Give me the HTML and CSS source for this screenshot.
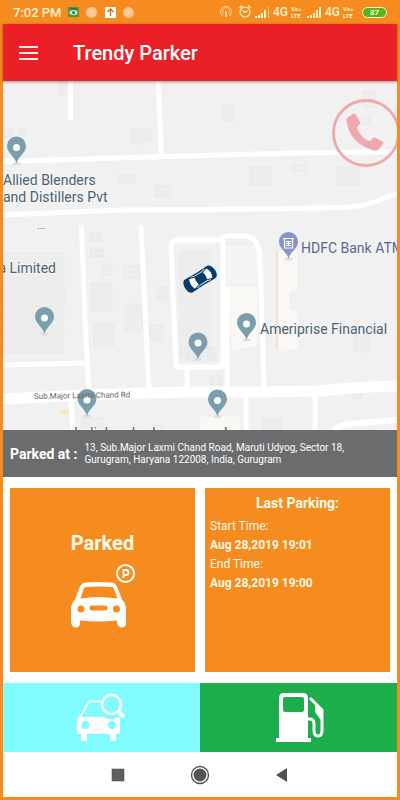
FILE: index.html
```html
<!DOCTYPE html>
<html lang="en">
<head>
<meta charset="utf-8">
<meta name="viewport" content="width=device-width, initial-scale=1">
<title>Trendy Parker</title>
<link rel="stylesheet" href="styles.css">
</head>
<body>
<div class="status">
  <span class="clock">7:02 PM</span>
  <svg class="notices" width="68" height="12" viewBox="68 6 68 12" aria-hidden="true">
    <rect x="68" y="7" width="11" height="10" rx="1" fill="#4a9a42"/>
    <ellipse cx="73.5" cy="12.500" rx="4" ry="2.500" fill="#d8ecc8"/><circle cx="73.500" cy="12.500" r="1.500" fill="#38705a"/><path d="M70 9h7" stroke="#285c38"/>
    <circle cx="91.500" cy="12.500" r="5.500" fill="#fbc58c"/><path d="M88 13l4-4M90 15l5-5M87 11l2-2" stroke="#fddcb8"/>
    <rect x="105" y="7" width="11" height="11" rx="1" fill="#fff"/><path d="M110.500 16V9.500M107.500 12l3-3 3 3" fill="none" stroke="#c67b22" stroke-width="1.500"/>
    <circle cx="128.500" cy="12.500" r="5.500" fill="#fbc58c"/><path d="M125 13l4-4M127 15l5-5M124 11l2-2" stroke="#fddcb8"/>
  </svg>
  <div class="signals">
    <svg width="32" height="14" viewBox="218 6 32 14" fill="none" aria-hidden="true">
      <g stroke="#fcd09a" stroke-width="1"><path d="M220.500 17a5.500 5.500 0 1 1 7 0M222 15a3.500 3.500 0 1 1 4 0"/><path d="M224 12v6" stroke-width="2"/></g>
      <g stroke="#fff3c8" stroke-width="1.200"><circle cx="243" cy="13" r="5"/><path d="M240.500 11.500L243 13.500l2.500-2M237.500 9l2.500-2.500M248.500 9L246 6.500"/></g>
    </svg>
    <svg class="bars" width="15" height="11" viewBox="0 0 15 11" aria-hidden="true"><path d="M0 9h2v2H0zM3 8h2v3H3zM6 6h2v5H6zM9 3h2v8H9z" fill="#fff8d8"/><path d="M13 0h1v11h-1z" fill="#fbc98b"/></svg>
    <span class="net">4G</span><span class="volte"><span>Vo»</span><span>LTE</span></span>
    <svg class="bars" width="15" height="11" viewBox="0 0 15 11" aria-hidden="true"><path d="M0 9h2v2H0zM3 8h2v3H3zM6 6h2v5H6zM9 3h2v8H9zM12 0h2v11h-2z" fill="#fff0c8"/></svg>
    <span class="net">4G</span><span class="volte"><span>Vo»</span><span>LTE</span></span>
    <span class="battery">87</span>
  </div>
</div>
<div class="app">
  <header class="topbar">
    <button class="menu" aria-label="Menu"><span></span><span></span><span></span></button>
    <h1>Trendy Parker</h1>
  </header>
  <main>
    <section class="map" aria-label="Map">
      <svg viewBox="3 81 394 349" preserveAspectRatio="xMidYMid slice">
        <defs>
          <g id="pin"><ellipse cx="0" cy="26" rx="4" ry="1.500" fill="#dcdfe0"/><path d="M0 26C-1.500 18.500-9.500 16-9.500 8.500a9.500 9.500 0 0 1 19 0C9.500 16 1.500 18.500 0 26z"/></g>
        </defs>
        <rect x="3" y="81" width="394" height="349" fill="#f1f1f1"/>
        <g fill="#ededed" stroke="#e4e4e4" stroke-width=".6">
          <path d="M59 81h9v13h-9zM4 130h9v8H4zM20 129h6v6h-6zM131 129h21v11h-9v4h-12zM118 175h17v8h-17zM155 186h16v11h-16zM90 232h11v9H90zM90 249h13v8H90zM4 253h60v33H4zM4 288h61v16H4zM4 306h60v16H4zM4 325h60v14H4zM4 342h59v11H4zM91 250h12v6H91zM103 264h9v11h-9zM124 266h16v12h-16zM91 283h21v28H91zM125 304h18v26h-18zM94 324h20v22H94zM157 287h10v13h-10zM150 325h13v16h-13z"/>
          <path d="M223 105h11v16h-11zM363 91h13v16h-13zM362 116h8v8h-8zM395 110h2v8h-2zM250 167h21v18h-21zM291 165h14v6h-14zM337 167h22v18h-22zM180 251h31v106h-31zM354 335h15v17h-15zM210 376h12v9h-12zM352 392h9v6h-9zM263 419h18v11h-18zM82 418h21v12H82zM152 425h10v5h-10zM187 353h12v8h-12zM208 347h8v13h-8z"/>
        </g>
        <g fill="#faf8f5" stroke="#eceae7" stroke-width=".6"><path d="M228 286h30v60l-27 6zM278 250h20v42h-8v17h9v40l-21 4zM200 416h41v14h-41z"/></g>
        <path d="M225 245h31q3 4 3 16v24h-34z" fill="#f5f5f5" stroke="#e6e6e6" stroke-width=".6"/>
        <path d="M277 251v98" stroke="#f2dfdc" stroke-width="2"/>
        <rect x="60" y="409" width="9" height="6" fill="#fbe8c8"/>
        <g fill="none" stroke="#fff" stroke-linejoin="round" stroke-width="5">
          <path d="M70.500 81v39M158 81l3.500 74M3 161.500L150 157l120-3.500 127-2M3 215l120-5 147-1 70-1.500c28-1 35-6 57-14"/>
          <path d="M81.500 227l3.500 90 4 80M141 227l8 163" stroke-linecap="round"/>
          <path d="M180 367h39q4 0 4-4V243q0-3-4-3h-42q-6 0-6 6l5 117q0 4 4 4zM220 242q2-6 8-6h17q14 1 15 22l4 130M3 365l82-2M187 368v23M227 286v106M71 401l2 29M246 396v34M315 394v36"/>
          <path d="M3 399q150-8 220-7 50 0 95-1 35-4 79-5" stroke-width="11"/>
          <path d="M334 430q5-5 16-6l47-4" stroke-width="6"/>
        </g>
        <g fill="#7b9eae">
          <use href="#pin" x="16.500" y="137.500"/><use href="#pin" x="44.500" y="308"/><use href="#pin" x="87" y="390"/><use href="#pin" x="198" y="333.500"/><use href="#pin" x="246.500" y="314"/><use href="#pin" x="217.500" y="390.500"/>
        </g>
        <g fill="#fff"><circle cx="16.500" cy="147.500" r="3.500"/><circle cx="44.500" cy="318" r="3.500"/><circle cx="87" cy="400" r="3.500"/><circle cx="198" cy="343" r="3.500"/><circle cx="246.500" cy="324" r="3.500"/><circle cx="217.500" cy="400.500" r="3.500"/></g>
        <use href="#pin" x="288.500" y="233" fill="#8b93cf"/>
        <path d="M283 238.500h11M284.500 239v9h8v-9M286 241.500h5M286 243.500h5M286 245.500h5M288.500 241v5" fill="none" stroke="#fff" stroke-width="1.200"/>
        <g class="place">
          <text x="3" y="185">Allied Blenders</text><text x="3" y="202">and Distillers Pvt</text>
          <text x="56" y="273" text-anchor="end">a Limited</text>
          <text x="260" y="334">Ameriprise Financial</text>
          <text x="301" y="253" class="bank">HDFC Bank ATM</text>
          <text x="74" y="438">IndiaLends</text><text x="152" y="438">Innovaccer Inc</text>
          <text x="37" y="229" class="dots">...</text>
        </g>
        <text x="34" y="399" class="road" transform="rotate(-1 34 399)">Sub.Major Laxmi Chand Rd</text>
        <g transform="translate(200 279) rotate(-32)">
          <path d="M-14-7.500Q0-6.500 13-7.500q4 1 4.500 7.500T13 7.500Q0 6.500-14 7.500-17.500 6-17.500 0T-14-7.500z" fill="#073b6b"/>
          <path d="M-9.500-5.500l5.500 1.500q-1 4 0 8l-5.500 1.500q-2.500-5.500 0-11zM6-4l5-1.500q3.500 5.500 0 11L6 4q1.500-4 0-8z" fill="#fff"/>
          <path d="M-7-6.300L-3-5.200H5l4-1.100M-7 6.300l4-1.100H5l4 1.100" fill="none" stroke="#d7e4ef" stroke-width=".9"/>
        </g>
      </svg>
      <button class="call" aria-label="Call"><svg viewBox="0 0 68 68" aria-hidden="true"><circle cx="34" cy="34" r="32.500" fill="none" stroke="#f0a9ab" stroke-width="2.800"/><path d="M15 25Q13 19 18 17l3-2q2-1 3 1l4 7q1 2-1 3l-2 2q1 6 8 12 3 2 5 2l3-3q1-1 3 0l7 4q1 1 0 2l-4 5q-2 3-7 1Q19 44 15 25z" fill="#f0a9ab"/></svg></button>
    </section>
    <section class="address"><strong>Parked at :</strong><p>13, Sub.Major Laxmi Chand Road, Maruti Udyog, Sector 18, Gurugram, Haryana 122008, India, Gurugram</p></section>
    <section class="cards">
      <button class="card parked">
        <span>Parked</span>
        <svg width="66" height="66" viewBox="70 564 66 66" aria-hidden="true">
          <circle cx="125.500" cy="574.500" r="8.500" fill="none" stroke="#fff" stroke-width="2"/><path d="M123.500 579v-8h2.500a2.500 2.500 0 0 1 0 5h-2.500" fill="none" stroke="#fff" stroke-width="1.800"/>
          <path fill="#fff" fill-rule="evenodd" d="M86 583.500q12-1 25 0 4 0 6 4l5 13q4 4 4 10v13q0 5-4 5t-5-5v-2q-18 2-37 0v2q0 5-4 5t-5-5v-13q0-6 4-10l5-13q2-4 6-4zM85.500 588q-1 0-2 2l-3 9.500q18-3 37 0l-3.500-9.500q-1-2-2-2-13-1-26.500 0zM81 606.500a3.500 3.500 0 1 0 0 7 3.500 3.500 0 0 0 0-7zM116.500 606.500a3.500 3.500 0 1 0 0 7 3.500 3.500 0 0 0 0-7zM92 606.500a2.500 2.500 0 0 0 0 5h13a2.500 2.500 0 0 0 0-5z"/>
        </svg>
      </button>
      <div class="card last"><h2>Last Parking:</h2><dl><dt>Start Time:</dt><dd>Aug 28,2019 19:01</dd><dt>End Time:</dt><dd>Aug 28,2019 19:00</dd></dl></div>
    </section>
    <section class="actions">
      <button class="find" aria-label="Find car"><svg width="50" height="50" viewBox="76 693 50 50" aria-hidden="true"><g fill="none" stroke="#fff"><path d="M78 719l10-17.500h11.500" stroke-width="2"/><circle cx="110.500" cy="704.500" r="9.500" stroke-width="2.500"/><path d="M117 711l6 6" stroke-width="4"/></g><path fill="#fff" fill-rule="evenodd" d="M79 717h23q8 4 16 0 1 0 1 2v15h-4v7h-6v-7H86v7h-6v-7h-4v-15zM84.500 721a4 4 0 1 0 0 8 4 4 0 0 0 0-8zM111 721a4 4 0 1 0 0 8 4 4 0 0 0 0-8z"/></svg></button>
      <button class="fuel" aria-label="Fuel"><svg width="50" height="50" viewBox="274 693 50 50" aria-hidden="true"><path fill="#fff" fill-rule="evenodd" d="M284 693h19q5 0 5 5v40h3v4h-35v-4h3v-40q0-5 5-5zM285 697q-2 0-2 2v11q0 2 2 2h17q2 0 2-2v-11q0-2-2-2z"/><path d="M308 719h2q4 0 4 5v6q0 6 4 6 4 0 4-6v-20L310 698" fill="none" stroke="#fff" stroke-width="3"/><path d="M315 703l8 7v10l-3-1-5-7z" fill="#fff"/></svg></button>
    </section>
  </main>
  <nav class="system">
    <button aria-label="Recent apps"><svg width="20" height="20" viewBox="0 0 20 20"><rect x="4" y="4" width="12" height="12" fill="#606060" stroke="#444" stroke-width=".5"/></svg></button>
    <button aria-label="Home"><svg width="20" height="20" viewBox="0 0 20 20"><circle cx="10" cy="10" r="8.500" fill="none" stroke="#505050" stroke-width="1.300"/><circle cx="10" cy="10" r="6.500" fill="#555"/></svg></button>
    <button aria-label="Back"><svg width="20" height="20" viewBox="0 0 20 20"><path d="M4 10l11-7v14z" fill="#505050"/></svg></button>
  </nav>
</div>
</body>
</html>
```
FILE: styles.css
```css
* { box-sizing: border-box; }
body {
  margin: 0;
  min-height: 100vh;
  display: flex;
  flex-direction: column;
  background: #f68b1f;
  font-family: Roboto, "Liberation Sans", sans-serif;
}
h1, h2, p, dl, dd { margin: 0; }
button { border: 0; padding: 0; background: none; font: inherit; color: inherit; }
svg { display: block; flex: none; }

.status {
  height: 24px;
  padding: 0 13px;
  display: flex;
  align-items: center;
  color: #fff6d0;
}
.clock { font-size: 13px; font-weight: 500; width: 55px; white-space: nowrap; }
.signals { margin-left: auto; display: flex; align-items: center; gap: 3px; }
.net { font-size: 12px; font-weight: 500; }
.volte {
  display: flex;
  flex-direction: column;
  width: 13px;
  font-size: 6px;
  line-height: 7px;
  font-weight: 700;
}
.battery {
  width: 25px;
  height: 11px;
  margin-left: 3px;
  border: 1px solid #fff3c8;
  border-radius: 6px;
  background: #58b31c;
  font-size: 8px;
  line-height: 9px;
  font-weight: 700;
  text-align: center;
}

.app {
  flex: 1;
  display: flex;
  flex-direction: column;
  margin: 0 3px 3px;
  background: #fff;
}
.topbar {
  height: 57px;
  padding: 0 16px;
  display: flex;
  align-items: center;
  gap: 35px;
  background: #eb2027;
  color: #fff;
  box-shadow: 0 1px 3px rgba(0, 0, 0, .4);
  position: relative;
  z-index: 1;
}
.topbar h1 { font-size: 20px; font-weight: 500; line-height: 24px; }
.menu { width: 19px; display: grid; gap: 4px; }
.menu span { height: 2px; background: #fde8e4; }

main { flex: 1; display: flex; flex-direction: column; }
.map { flex: 1; min-height: 240px; position: relative; overflow: hidden; }
.map > svg { position: absolute; width: 100%; height: 100%; }
.place { font-size: 14px; fill: #4a6170; paint-order: stroke; stroke: #f6f6f6; stroke-width: 2px; }
.bank { fill: #5a6294; }
.dots { font-size: 10px; }
.road { font-size: 8px; fill: #666; }
.call { position: absolute; top: 18px; right: -3px; width: 68px; height: 68px; }

.address {
  min-height: 47px;
  padding: 0 7px;
  display: flex;
  align-items: center;
  gap: 7px;
  background: #6b6c6e;
  color: #fff;
}
.address strong { font-size: 14px; white-space: nowrap; }
.address p { font-size: 10px; line-height: 12px; }

.cards {
  display: grid;
  grid-template-columns: 1fr 1fr;
  gap: 10px;
  padding: 11px 7px;
}
.card { min-height: 184px; background: #f68b1f; color: #fffbe8; }
.parked {
  display: flex;
  flex-direction: column;
  align-items: center;
  justify-content: center;
  gap: 8px;
  font-size: 20px;
  line-height: 24px;
  font-weight: 700;
}
.last { padding: 5px; }
.last h2 { font-size: 14px; line-height: 20px; text-align: center; margin-bottom: 4px; }
.last dl { font-size: 12px; line-height: 19px; }
.last dd { font-weight: 700; }

.actions { display: grid; grid-template-columns: 1fr 1fr; }
.actions button { height: 69px; display: grid; place-items: center; }
.find { background: #80fbff; }
.fuel { background: #1bae4b; }

.system { height: 45px; display: flex; align-items: center; justify-content: center; gap: 62px; }
```
